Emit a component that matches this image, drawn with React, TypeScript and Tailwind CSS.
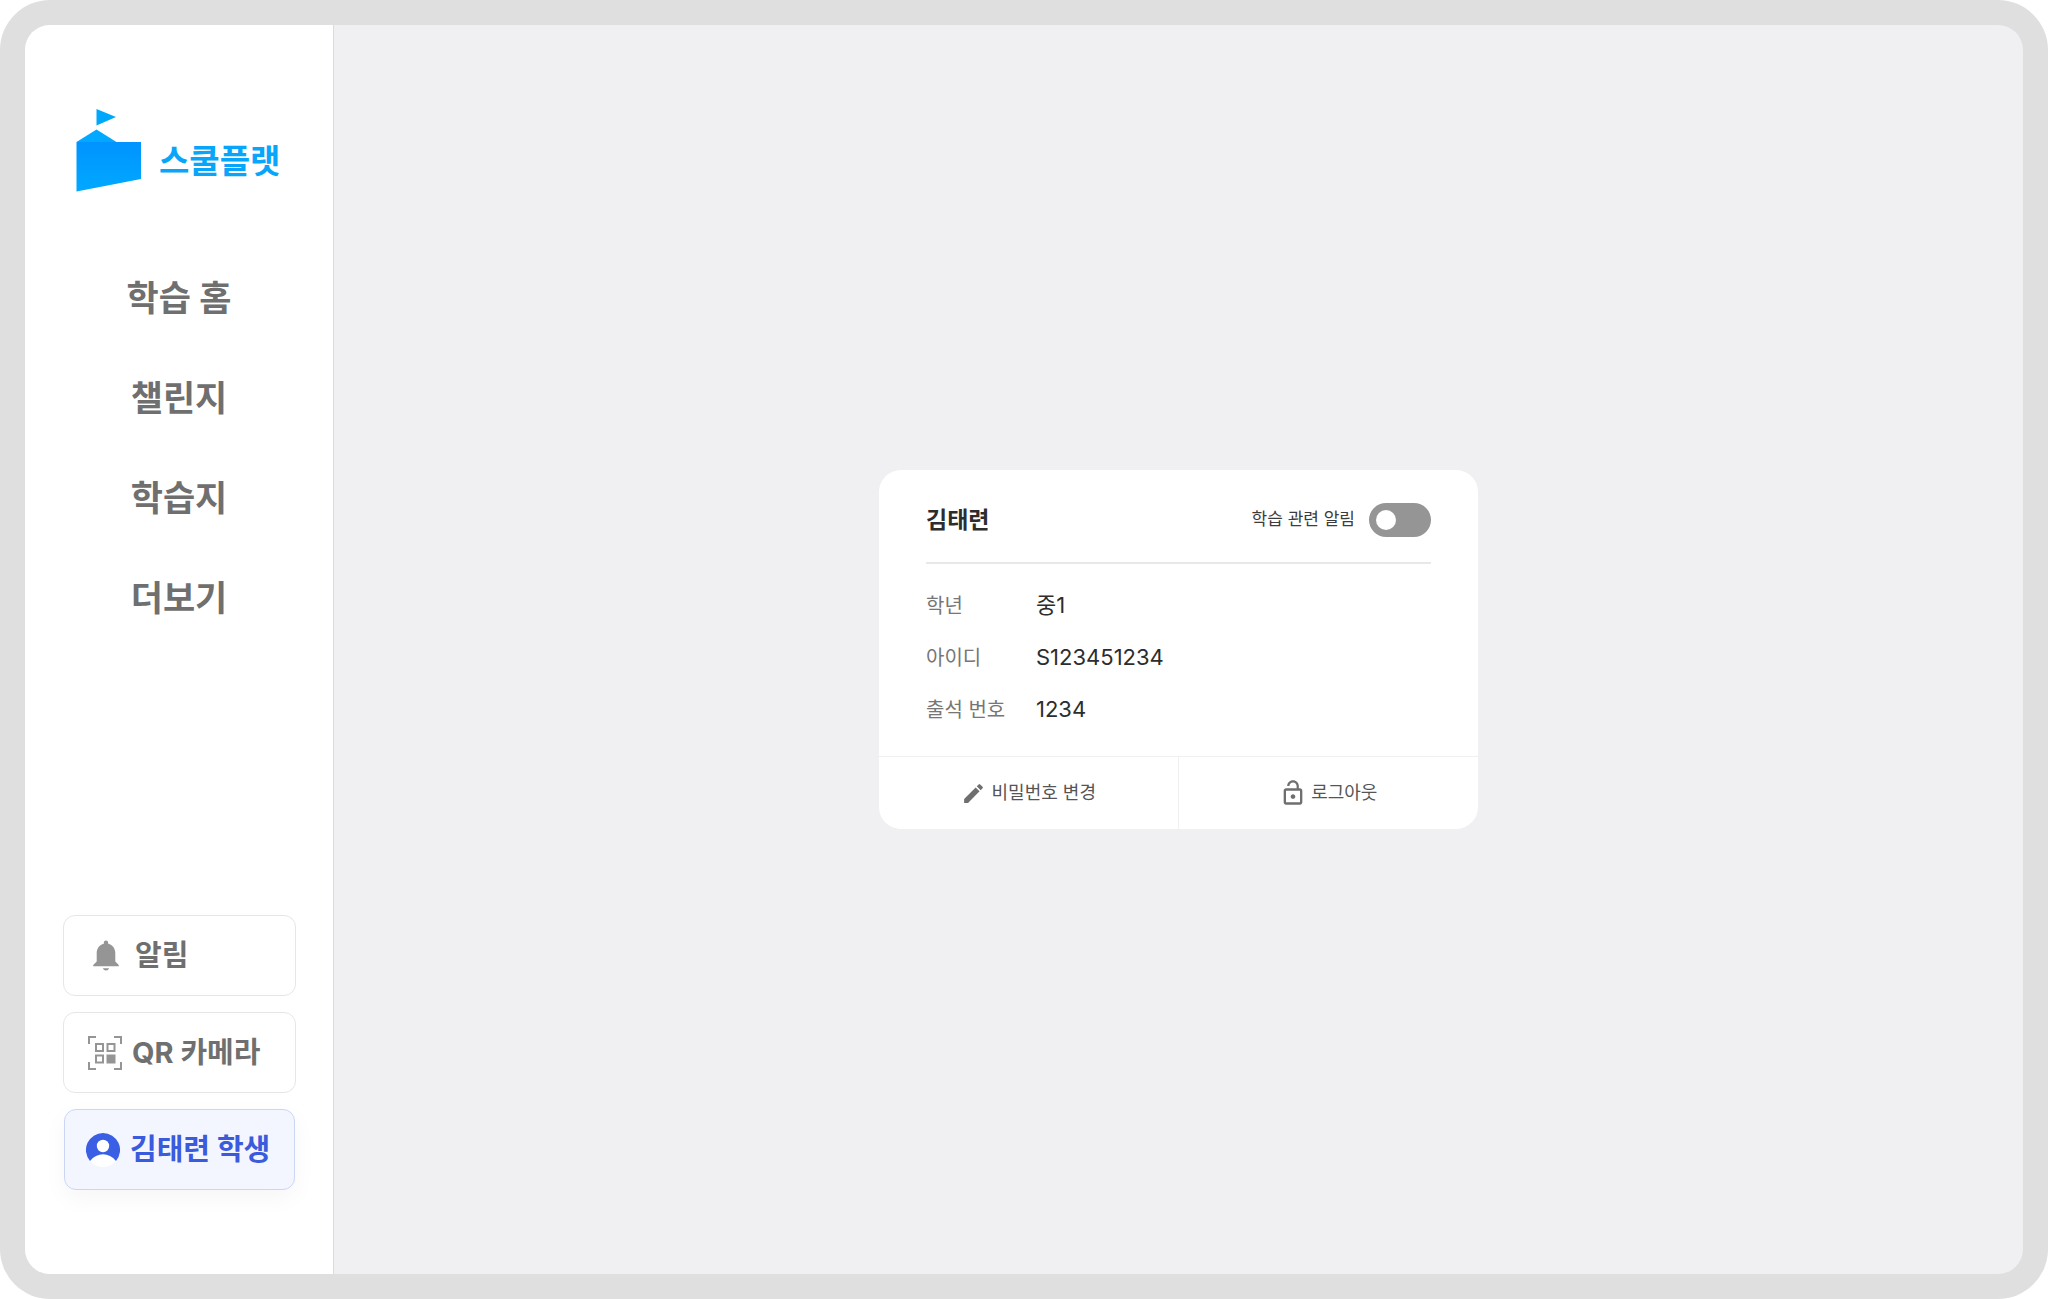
import { useState } from 'react'
import { MdEdit, MdLockOpen } from 'react-icons/md'

const menus = ['학습 홈', '챌린지', '학습지', '더보기']

const profile = [
    { label: '학년', value: '중1' },
    { label: '아이디', value: 'S123451234' },
    { label: '출석 번호', value: '1234' },
]

function Logo() {
    return (
        <a href="#" className="ml-[51px] mt-[84px] flex h-[84px] items-end">
            <svg className="h-[84px] w-[65px]" viewBox="0 0 65 84" aria-hidden="true">
                <defs>
                    <linearGradient id="wall" x1="0" y1="0" x2="0" y2="1">
                        <stop offset="0" stopColor="#0093ff" />
                        <stop offset="1" stopColor="#00a9ff" />
                    </linearGradient>
                </defs>
                <path d="M20.500 0L40 8L20.500 16.500Z" fill="#00a8fc" />
                <path d="M0.500 33L20.500 20.500L40.500 33Z" fill="#00a9ff" />
                <path d="M0.500 33H65V70L0.500 82.500Z" fill="url(#wall)" />
            </svg>
            <span className="ml-[18px] pb-[9px] text-[33px] font-bold leading-[46px] text-[#08a6fb]">스쿨플랫</span>
        </a>
    )
}

function BellIcon() {
    return (
        <svg className="h-8 w-[26px]" viewBox="0 0 26 32" fill="#959595" aria-hidden="true">
            <path d="M13 0.500a2.200 2.200 0 0 1 2.200 2.200v1C19.600 4.700 22.300 8.600 22.300 13v8.500L25.800 25v1.200H0.200V25l3.500-3.500V13C3.700 8.600 6.400 4.700 10.800 3.700v-1A2.200 2.200 0 0 1 13 0.500z" />
            <path d="M9.800 28.200h6.400a3.400 3.400 0 0 1-6.400 0z" />
        </svg>
    )
}

function QrIcon() {
    return (
        <svg className="size-[34px]" viewBox="0 0 34 34" fill="none" stroke="#959595" strokeWidth="2" aria-hidden="true">
            <path d="M1 8V1H8M26 1H33V8M33 26V33H26M8 33H1V26" />
            <path d="M8 8H15V15H8ZM19.500 8H26.500V15H19.500ZM8 19.500H15V26.500H8Z" />
            <path d="M19.500 19.500H26.500V26.500H19.500Z" fill="#959595" />
        </svg>
    )
}

function UserIcon() {
    return (
        <svg className="size-[34px]" viewBox="0 0 34 34" aria-hidden="true">
            <circle cx="17" cy="17" r="17" fill="#fff" />
            <path d="M17 0A17 17 0 0 1 30 28C23 19 11 19 4 28A17 17 0 0 1 17 0Z" fill="#3a5fe5" />
            <circle cx="17" cy="13" r="6.200" fill="#fff" />
        </svg>
    )
}

function Sidebar() {
    return (
        <aside className="flex w-[309px] shrink-0 flex-col border-r border-[#dcdcdc] bg-white">
            <Logo />
            <nav className="mt-[55px] flex flex-col items-center">
                {menus.map((menu) => (
                    <a key={menu} href="#" className="py-6 text-[35px] font-bold leading-[52px] text-[#6f6f6f]">
                        {menu}
                    </a>
                ))}
            </nav>
            <div className="mb-[84px] ml-[38px] mr-[37px] mt-auto flex flex-col gap-4 text-[29px] font-bold text-[#6f6f6f]">
                <button className="flex h-[81px] items-center gap-4 rounded-xl border border-[#e6e6e6] pl-[29px]">
                    <BellIcon />
                    알림
                </button>
                <button className="flex h-[81px] items-center gap-2.5 rounded-xl border border-[#e6e6e6] pl-6">
                    <QrIcon />
                    QR 카메라
                </button>
                <button className="mx-px flex h-[81px] items-center gap-2.5 rounded-xl border border-[#cbd6f5] bg-[#f4f6ff] pl-[21px] text-[#3a5bdc] shadow-[0_8px_24px_rgba(0,0,0,0.04)]">
                    <UserIcon />
                    김태련 학생
                </button>
            </div>
        </aside>
    )
}

function ProfileCard() {
    const [alarm, setAlarm] = useState(false)

    return (
        <section className="w-[599px] rounded-[22px] bg-white">
            <div className="px-[47px]">
                <div className="flex h-[94px] items-center justify-between border-b-2 border-[#e8e8e8] pt-2">
                    <h1 className="text-[23px] font-bold text-[#2d2d2d]">김태련</h1>
                    <label className="flex items-center gap-3.5 text-[17px] text-[#3c3c3c]">
                        학습 관련 알림
                        <input
                            type="checkbox"
                            role="switch"
                            checked={alarm}
                            onChange={(e) => setAlarm(e.target.checked)}
                            className="h-[34px] w-[62px] appearance-none rounded-full bg-[#959595] p-[7px] before:block before:size-5 before:rounded-full before:bg-white checked:bg-[#3a5fe5] checked:before:ml-7"
                        />
                    </label>
                </div>
                <dl className="flex flex-col gap-5 pb-[30px] pt-[26px] text-xl leading-8">
                    {profile.map((item) => (
                        <div key={item.label} className="flex">
                            <dt className="w-[110px] text-[#767676]">{item.label}</dt>
                            <dd className="text-[22px] leading-[30px] text-[#2d2d2d]">{item.value}</dd>
                        </div>
                    ))}
                </dl>
            </div>
            <div className="grid grid-cols-2 divide-x divide-[#f0f0f0] border-t border-[#f0f0f0] text-lg text-[#555]">
                <button className="flex h-[72px] items-center justify-center gap-1.5">
                    <MdEdit className="size-[25px] text-[#6f6f6f]" />
                    비밀번호 변경
                </button>
                <button className="flex h-[72px] items-center justify-center gap-1">
                    <MdLockOpen className="size-7 text-[#6f6f6f]" />
                    로그아웃
                </button>
            </div>
        </section>
    )
}

function App() {
    return (
        <div className="flex min-h-screen rounded-[50px] bg-[#dfdfdf] p-[25px] font-['Inter','Noto_Sans_CJK_KR',sans-serif]">
            <div className="flex flex-1 overflow-hidden rounded-[25px] bg-[#f0f0f3]">
                <Sidebar />
                <main className="flex flex-1 items-center justify-center">
                    <ProfileCard />
                </main>
            </div>
        </div>
    )
}

export default App
